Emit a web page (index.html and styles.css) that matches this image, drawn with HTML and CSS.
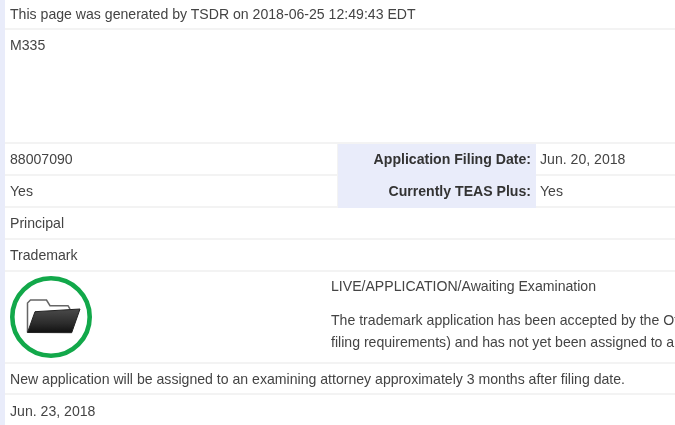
FILE: index.html
```html
<!DOCTYPE html>
<html lang="en">
<head>
<meta charset="utf-8">
<title>TSDR</title>
<link rel="stylesheet" href="styles.css">
</head>
<body>
<main class="page">
  <div class="row row-top"><div class="cell">This page was generated by TSDR on 2018-06-25 12:49:43 EDT</div></div>
  <div class="row row-mark"><div class="cell">M335</div></div>
  <div class="row row-std">
    <div class="cell col-a">88007090</div>
    <div class="cell label">Application Filing Date:</div>
    <div class="cell value">Jun. 20, 2018</div>
  </div>
  <div class="row row-std">
    <div class="cell col-a">Yes</div>
    <div class="cell label">Currently TEAS Plus:</div>
    <div class="cell value">Yes</div>
  </div>
  <div class="row row-std"><div class="cell">Principal</div></div>
  <div class="row row-std"><div class="cell">Trademark</div></div>
  <div class="row row-status">
    <div class="icon-col">
      <svg class="status-icon" width="82" height="82" viewBox="0 0 82 82" aria-hidden="true">
        <defs>
          <linearGradient id="folder" x1="0" y1="0" x2="0" y2="1">
            <stop offset="0" stop-color="#4a4a4a"/>
            <stop offset="0.6" stop-color="#2c2c2c"/>
            <stop offset="1" stop-color="#111"/>
          </linearGradient>
        </defs>
        <circle cx="41" cy="41" r="38.7" fill="#fff" stroke="#12a84a" stroke-width="4.6"/>
        <path d="M17.500 56.500V27L20.500 24H36.500L40 29.700H58L60 33" fill="#fff" stroke="#666" stroke-width="1.500"/>
        <path d="M17.500 56.500L25 35.700L70 33L61.700 56.700Z" fill="url(#folder)" stroke="#222" stroke-width="1"/>
      </svg>
    </div>
    <div class="status-text">
      <p class="status-line">LIVE/APPLICATION/Awaiting Examination</p>
      <p class="status-desc">The trademark application has been accepted by the Office (has met the minimum<br>filing requirements) and has not yet been assigned to an examiner.</p>
    </div>
  </div>
  <div class="row row-std row-note"><div class="cell">New application will be assigned to an examining attorney approximately 3 months after filing date.</div></div>
  <div class="row row-last"><div class="cell">Jun. 23, 2018</div></div>
</main>
</body>
</html>
```
FILE: styles.css
```css
html, body {
  margin: 0;
  height: 100%;
  overflow: hidden;
  background: #fff;
}
.page {
  width: 675px;
  height: 425px;
  box-sizing: border-box;
  border-left: 5px solid #e9ecfa;
  overflow: hidden;
  font: 14.1px/16px "Liberation Sans", Arial, sans-serif;
  color: #444;
  white-space: nowrap;
  filter: blur(0.5px);
}
.row {
  display: flex;
  box-sizing: border-box;
  border-bottom: 2px solid #f3f3f3;
}
.row-top { height: 30px; }
.row-mark { height: 114px; }
.row-std { height: 32px; }
.row-status { height: 92px; }
.row-note { height: 31px; }
.row-last { height: 31px; border-bottom: 0; }
.cell {
  padding: 7px 0 0 5px;
}
.row-top .cell { padding-top: 6px; }
.row-last .cell { padding-top: 8px; }
.col-a { flex: none; width: 333px; box-sizing: border-box; border-right: 1px solid #f3f3f3; }
.label {
  flex: none;
  width: 198px;
  box-sizing: border-box;
  padding-right: 5px;
  background: #e9ecfa;
  text-align: right;
  font-weight: 700;
  color: #333;
  margin-bottom: -2px;
}
.value { padding-left: 4px; }
.icon-col { flex: none; width: 326px; padding: 4px 0 0 5px; box-sizing: border-box; }
.status-icon { display: block; }
.status-text p { margin: 0; }
.status-line { padding-top: 6px; }
.status-desc { padding-top: 16px; line-height: 21.5px; }
```
